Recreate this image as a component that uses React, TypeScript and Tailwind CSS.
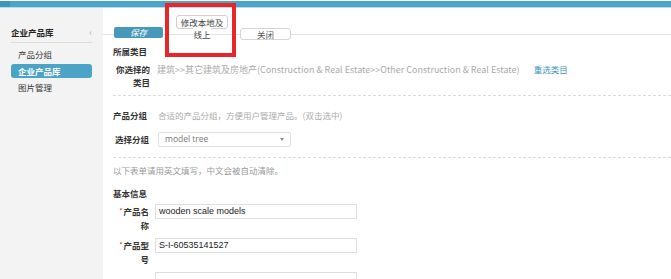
import React from "react";

const cjk = '"Noto Sans CJK SC", "Open Sans", sans-serif';

const sideItems = [
  { label: "产品分组", active: false },
  { label: "企业产品库", active: true },
  { label: "图片管理", active: false },
];

function Sidebar() {
  return (
    <aside className="w-[103px] shrink-0 bg-[#f3f3f3] pt-[18px] pl-[11px] pr-[11px]">
      <div className="flex items-center justify-between h-[13px] text-[8.5px] font-bold text-[#222] leading-[13px]">
        <span>企业产品库</span>
        <span className="text-[#aaa] font-normal text-[9px]">‹</span>
      </div>
      <div className="mt-[3px] h-px bg-[#dcdcdc]" />
      <nav className="mt-[4px] flex flex-col gap-[2.5px]">
        {sideItems.map((it) => (
          <div
            key={it.label}
            className={
              it.active
                ? "h-[14px] leading-[14px] rounded-[3px] bg-[#4ba3c6] text-white font-bold text-[8.5px] pl-[7px]"
                : "h-[14px] leading-[14px] text-[#333] text-[8.5px] pl-[7px]"
            }
          >
            {it.label}
          </div>
        ))}
      </nav>
    </aside>
  );
}

function Label({ star, text, width }: { star?: boolean; text: string; width: number }) {
  return (
    <div
      className="shrink-0 text-right text-[8.5px] leading-[14px] text-[#333] font-bold break-all"
      style={{ width }}
    >
      {star && <span className="text-[#e33] text-[6px] align-top mr-[1px]">*</span>}
      {text}
    </div>
  );
}

function Field({ label, value, star = true }: { label: string; value: string; star?: boolean }) {
  return (
    <div className="flex items-start gap-[6px] ml-[5px]">
      <Label star={star} text={label} width={31} />
      <div className="w-[202px] h-[15px] border border-[#dedede] bg-white flex items-center pl-[3px] text-[9px] text-[#222]" style={{ fontFamily: '"Liberation Sans", Arial, sans-serif' }}>
        {value}
      </div>
    </div>
  );
}

export default function App() {
  return (
    <div className="relative w-[671px] h-[279px] overflow-hidden bg-white flex flex-col" style={{ fontFamily: cjk }}>
      {/* top bar */}
      <div className="h-px bg-white" />
      <div className="h-[6px] bg-[#4ca5c7] flex">
        <div className="w-[10px] bg-[#3e97b9]" />
      </div>
      <div className="h-px bg-[#b7dbe9]" />

      <div className="flex flex-1 min-h-0">
        <Sidebar />

        <main className="flex-1 min-w-0">
          {/* toolbar */}
          <div className="h-[27px] pt-[7px] border-b border-[#e3e3e3]">
            <div className="flex items-start pl-[11px]">
              <button className="mt-[12px] w-[49px] h-[11px] rounded-[2px] bg-[#4799bb] text-white text-[8.5px] italic leading-[11px]">
                保存
              </button>
              <div className="ml-[13px] w-[52px] flex flex-col items-center">
                <div className="w-[52px] h-[14px] rounded-[3px] border border-[#cfcfcf] bg-white text-[8.5px] text-[#444] leading-[12px] text-center">
                  修改本地及
                </div>
                <div className="mt-[-1px] text-[8.5px] text-[#444] leading-[13px] bg-white relative z-10">线上</div>
              </div>
              <button className="ml-[12px] mt-[13px] w-[51px] h-[12px] rounded-[3px] border border-[#d4d4d4] bg-white text-[8.5px] text-[#555] leading-[10px]">
                关闭
              </button>
            </div>
          </div>

          <div className="pl-[10px]">
            <div className="mt-[10px] text-[8.5px] leading-[13px] font-bold text-[#333]">所属类目</div>

            <div className="mt-[5px] flex items-start">
              <div className="w-[36px] text-right text-[8.5px] leading-[13px] font-bold text-[#333] ml-[1px]">
                你选择的类目
              </div>
              <div className="ml-[7px] text-[9px] leading-[13px] text-[#aaa] whitespace-nowrap">
                建筑&gt;&gt;其它建筑及房地产(Construction &amp; Real Estate&gt;&gt;Other Construction &amp; Real Estate)
              </div>
              <a className="ml-[14px] text-[8.5px] leading-[13px] text-[#3d93bd] whitespace-nowrap">重选类目</a>
            </div>

            <div className="mt-[6px] border-t border-dashed border-[#dcdcdc]" />

            <div className="mt-[13px] flex items-center h-[13px]">
              <span className="text-[8.5px] font-bold text-[#333]">产品分组</span>
              <span className="ml-[11px] text-[8.5px] text-[#aaa]">合适的产品分组，方便用户管理产品。(双击选中)</span>
            </div>

            <div className="mt-[10px] flex items-center">
              <span className="ml-[2px] text-[8.5px] font-bold text-[#333]">选择分组</span>
              <div className="ml-[9px] w-[133px] h-[15px] border border-[#e0e0e0] rounded-[2px] flex items-center justify-between px-[6px]">
                <span className="text-[8.5px] text-[#777]" style={{ fontFamily: '"Open Sans", sans-serif' }}>model tree</span>
                <span className="w-0 h-0 border-l-[2.5px] border-r-[2.5px] border-t-[3px] border-l-transparent border-r-transparent border-t-[#888]" />
              </div>
            </div>

            <div className="mt-[10px] border-t border-dashed border-[#dcdcdc]" />

            <div className="mt-[6px] text-[8.5px] leading-[13px] text-[#999]">以下表单请用英文填写，中文会被自动清除。</div>

            <div className="mt-[10px] text-[8.5px] leading-[13px] font-bold text-[#333]">基本信息</div>

            <div className="mt-[4px] flex flex-col gap-[6px]">
              <Field label="产品名称" value="wooden scale models" />
              <Field label="产品型号" value="S-I-60535141527" />
              <Field label="" value="" star={false} />
            </div>
          </div>
        </main>
      </div>

      {/* red annotation box */}
      <div className="absolute left-[165px] top-[3px] w-[71px] h-[54px] border-4 border-[#e8262a] pointer-events-none" />
    </div>
  );
}
